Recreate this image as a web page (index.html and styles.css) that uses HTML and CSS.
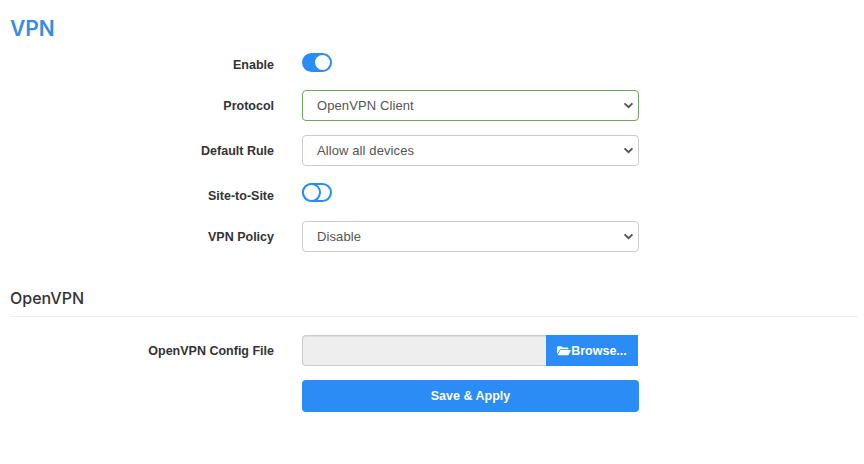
FILE: index.html
```html
<!DOCTYPE html>
<html lang="en">

<head>
    <meta charset="UTF-8" />
    <title>VPN</title>
    <link rel="stylesheet" href="styles.css">
</head>

<body>
    <h2 class="page-title">VPN</h2>
    <form class="form">
        <div class="row row-switch">
            <label class="row-label">Enable</label>
            <div class="switch switch-on"><span class="knob"></span></div>
        </div>
        <div class="row">
            <label class="row-label">Protocol</label>
            <div class="select select-valid">
                <span>OpenVPN Client</span>
                <svg class="chevron" viewBox="0 0 12 8"><path d="M1.500 1.500 6 6l4.500-4.500" /></svg>
            </div>
        </div>
        <div class="row">
            <label class="row-label">Default Rule</label>
            <div class="select">
                <span>Allow all devices</span>
                <svg class="chevron" viewBox="0 0 12 8"><path d="M1.500 1.500 6 6l4.500-4.500" /></svg>
            </div>
        </div>
        <div class="row row-switch row-switch-low">
            <label class="row-label">Site-to-Site</label>
            <div class="switch"><span class="knob"></span></div>
        </div>
        <div class="row">
            <label class="row-label">VPN Policy</label>
            <div class="select">
                <span>Disable</span>
                <svg class="chevron" viewBox="0 0 12 8"><path d="M1.500 1.500 6 6l4.500-4.500" /></svg>
            </div>
        </div>

        <h3 class="section-title">OpenVPN</h3>

        <div class="row">
            <label class="row-label">OpenVPN Config File</label>
            <div class="file-group">
                <div class="file-input"></div>
                <div class="browse">
                    <svg class="folder" viewBox="0 0 16 12"><path d="M0 2q0-1 1-1h4l1.500 1.500H12q1 0 1 1V4.500H3.500L0 10zM3.800 5.500H16l-3 6H.7z" /></svg>Browse...
                </div>
            </div>
        </div>
        <div class="row">
            <span class="row-label"></span>
            <button type="button" class="save">Save &amp; Apply</button>
        </div>
    </form>
</body>

</html>
```

FILE: styles.css
```css
body {
    font-family: "Liberation Sans", Arial, sans-serif;
    font-size: 13px;
    color: #333;
    background-color: #fff;
    margin: 0;
    padding: 0 6px 0 10px;
}

.page-title {
    margin: 0;
    padding-top: 16px;
    height: 34px;
    line-height: 26px;
    font-family: Inter, "Liberation Sans", sans-serif;
    font-size: 21px;
    font-weight: 600;
    color: #368ee0;
}

.row {
    display: flex;
    align-items: center;
    height: 31px;
    margin-bottom: 14px;
}

.row-switch {
    height: 26px;
    align-items: flex-start;
}

.row-switch .row-label {
    margin-top: 8px;
}

.row-switch-low {
    height: 27px;
}

.row-switch-low .row-label {
    margin-top: 9px;
}

.row-label {
    width: 264px;
    margin-right: 28px;
    text-align: right;
    font-size: 12.5px;
    font-weight: bold;
    color: #333;
}

.select {
    height: 29px;
    display: flex;
    align-items: center;
    justify-content: space-between;
    padding: 0 4px 0 14px;
    width: 317px;
    border: 1px solid #ccc;
    border-radius: 4px;
    color: #555;
    letter-spacing: 0.1px;
}

.select-valid {
    border-color: #6ea55f;
}

.chevron {
    width: 11px;
    height: 7px;
    fill: none;
    stroke: #555;
    stroke-width: 2.2;
}

.switch {
    position: relative;
    width: 26px;
    height: 15px;
    margin-top: 3px;
    border: 2px solid #2a8cf4;
    border-radius: 10px;
    background-color: #fff;
}

.switch-on {
    background-color: #2a8cf4;
}

.knob {
    position: absolute;
    top: 0;
    left: 0;
    width: 15px;
    height: 15px;
    border-radius: 50%;
    background-color: #fff;
    box-shadow: 0 0 0 2px #2a8cf4;
}

.switch-on .knob {
    left: 11px;
    box-shadow: none;
}

.section-title {
    margin: 38px 0 18px;
    padding-bottom: 10px;
    line-height: 16px;
    font-size: 16px;
    font-weight: 500;
    font-family: Inter, "Liberation Sans", sans-serif;
    color: #333;
    border-bottom: 1px solid #eee;
}

.file-group {
    display: flex;
    width: 336px;
    height: 31px;
}

.file-input {
    flex: 1;
    background-color: #eee;
    border: 1px solid #ccc;
    border-right: none;
    border-radius: 4px 0 0 4px;
    box-shadow: inset 0 1px 1px rgba(0, 0, 0, 0.075);
}

.browse {
    width: 92px;
    display: flex;
    align-items: center;
    justify-content: center;
    background-color: #2a8cf4;
    color: #fff;
    font-size: 12.5px;
    font-weight: bold;
}

.folder {
    width: 14px;
    height: 11px;
    fill: #fff;
}

.save {
    width: 337px;
    height: 32px;
    border: none;
    border-radius: 4px;
    background-color: #2a8cf4;
    color: #fff;
    font-family: "Liberation Sans", Arial, sans-serif;
    font-size: 12.5px;
    font-weight: bold;
}
```
